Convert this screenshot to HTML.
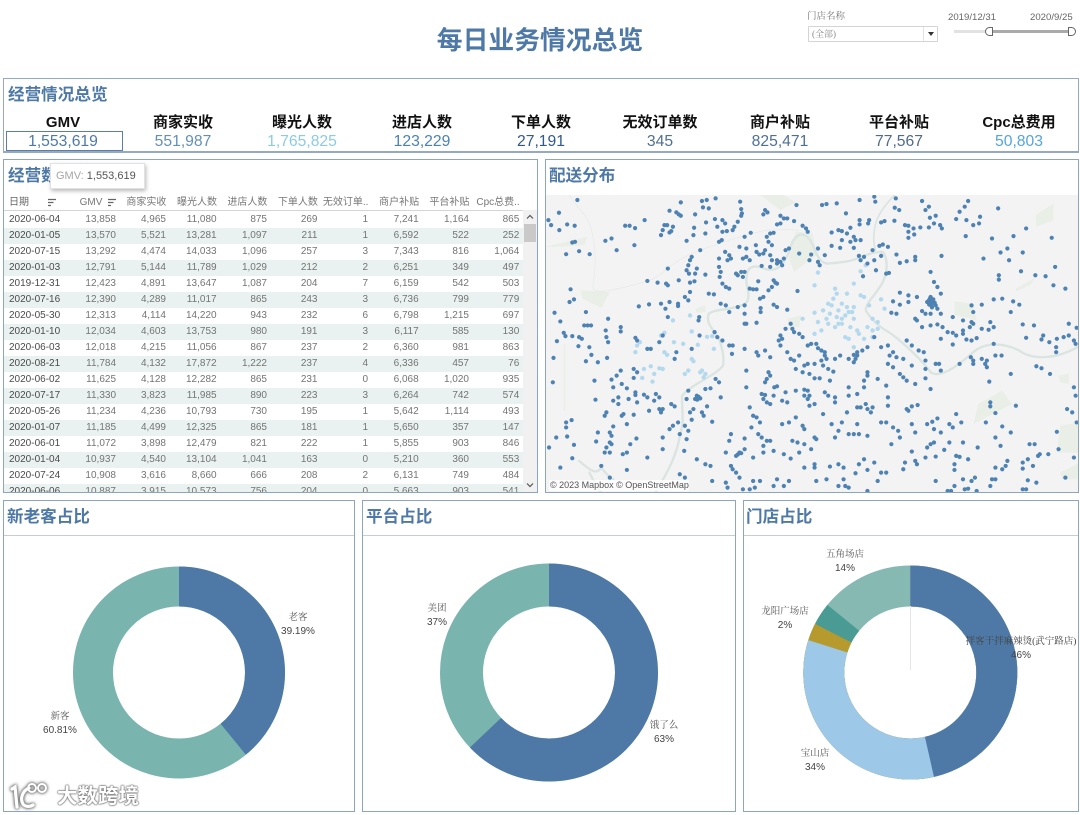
<!DOCTYPE html>
<html lang="zh-CN"><head><meta charset="utf-8"><title>每日业务情况总览</title>
<style>
*{box-sizing:border-box;margin:0;padding:0}
html,body{width:1080px;height:815px;overflow:hidden;background:#fff}
body{position:relative;font-family:"Liberation Sans","Noto Sans CJK SC",sans-serif;color:#444;filter:blur(.3px)}
.a{position:absolute}
.p{position:absolute;border:1px solid #8ea5c2;background:#fff}
.t{position:absolute;font-weight:700;font-size:16.6px;line-height:22px;color:#4e79a7;white-space:nowrap}
.k{position:absolute;width:120px;text-align:center;white-space:nowrap}
.kh{top:112px;font-size:15px;line-height:21px;font-weight:700;color:#111}
.kv{top:132px;font-size:15.7px;line-height:19px}
.hd{position:absolute;top:196px;font-size:10px;line-height:14px;color:#777;text-align:right;white-space:nowrap;width:50.4px}
.r{position:absolute;left:4px;width:519px;height:16.05px;font-size:10px;line-height:16px;color:#747474;white-space:nowrap}
.r:nth-child(even){background:#e9f2f0}
.r span{position:absolute;text-align:right;width:50px;top:0}
.r span:nth-child(1){left:5px;text-align:left;color:#4a4a4a;width:60px}
.r span:nth-child(2){left:62px}.r span:nth-child(3){left:112px}.r span:nth-child(4){left:162.6px}
.r span:nth-child(5){left:213px}.r span:nth-child(6){left:263.5px}.r span:nth-child(7){left:314px}
.r span:nth-child(8){left:364.7px}.r span:nth-child(9){left:415px}.r span:nth-child(10){left:465.3px}
.l{position:absolute;text-align:center;width:120px;font-size:10px;line-height:14px;color:#444;white-space:nowrap}
.l b{display:block;font:400 9.5px/14px "Liberation Serif","Noto Serif CJK SC",serif;color:#555}
.hr{position:absolute;height:1px;background:#c3cedc}
</style></head><body>

<div class="a" style="left:340px;width:400px;top:22px;text-align:center;font-size:25.8px;line-height:38px;font-weight:700;color:#4e79a7">每日业务情况总览</div>

<div class="a" style="left:807px;top:10px;font:400 9.5px/14px 'Liberation Serif','Noto Serif CJK SC',serif;color:#777">门店名称</div>
<div class="a" style="left:808px;top:26px;width:130px;height:16px;border:1px solid #d4d4d4;border-radius:1px;font:400 9px/14px 'Liberation Serif','Noto Serif CJK SC',serif;color:#888;padding-left:3px">(全部)
  <div class="a" style="left:114px;top:0;width:1px;height:14px;background:#e2e2e2"></div>
  <div class="a" style="left:119px;top:5px;border-left:3px solid transparent;border-right:3px solid transparent;border-top:4px solid #333"></div>
</div>
<div class="a" style="left:948px;top:12px;font-size:9.6px;line-height:12px;color:#666">2019/12/31</div>
<div class="a" style="left:1030px;top:12px;font-size:9.6px;line-height:12px;color:#666">2020/9/25</div>
<div class="a" style="left:954px;top:30px;width:36px;height:3px;background:#e2e2e2"></div>
<div class="a" style="left:989px;top:30px;width:82px;height:3px;background:#aaa"></div>
<div class="a" style="left:985px;top:27px;width:8px;height:9px;background:#fff;border:1px solid #666;border-radius:4.5px 0 0 4.5px"></div>
<div class="a" style="left:1068px;top:27px;width:8px;height:9px;background:#fff;border:1px solid #666;border-radius:0 4.5px 4.5px 0"></div>

<!-- KPI panel -->
<div class="p" style="left:3px;top:78px;width:1076px;height:75px;border-bottom-width:2px;border-color:#94a9c4"></div>
<div class="t" style="left:8px;top:84px">经营情况总览</div>
<div class="a" style="left:6px;top:131px;width:117px;height:20px;border:1px solid #5b7ea8"></div>
<div class="k kh" style="left:3px">GMV</div><div class="k kv" style="left:3px;color:#4e79a7">1,553,619</div>
<div class="k kh" style="left:123px">商家实收</div><div class="k kv" style="left:123px;color:#6490b8">551,987</div>
<div class="k kh" style="left:242px">曝光人数</div><div class="k kv" style="left:242px;color:#8ccbe4">1,765,825</div>
<div class="k kh" style="left:362px">进店人数</div><div class="k kv" style="left:362px;color:#4a82b6">123,229</div>
<div class="k kh" style="left:481px">下单人数</div><div class="k kv" style="left:481px;color:#31598f">27,191</div>
<div class="k kh" style="left:600px">无效订单数</div><div class="k kv" style="left:600px;color:#4f7096">345</div>
<div class="k kh" style="left:720px">商户补贴</div><div class="k kv" style="left:720px;color:#4f7096">825,471</div>
<div class="k kh" style="left:839px">平台补贴</div><div class="k kv" style="left:839px;color:#4f6b8c">77,567</div>
<div class="k kh" style="left:959px">Cpc总费用</div><div class="k kv" style="left:959px;color:#55a5dd">50,803</div>

<!-- table panel -->
<div class="p" style="left:3px;top:159px;width:535px;height:334px"></div>
<div class="t" style="left:8px;top:165px">经营数据</div>
<div class="a" style="left:9px;top:196px;font-size:10px;line-height:14px;color:#666">日期</div>
<svg class="a" style="left:47px;top:198px" width="10" height="10"><path d="M1 1.5h8M1 4.5h5.5M1 7.5h3" stroke="#666" stroke-width="1.3" fill="none"/></svg>
<div class="hd" style="left:52px">GMV</div>
<svg class="a" style="left:107px;top:198px" width="10" height="10"><path d="M1 1.5h8M1 4.5h5.5M1 7.5h3" stroke="#666" stroke-width="1.3" fill="none"/></svg>
<div class="hd" style="left:116px">商家实收</div>
<div class="hd" style="left:166.6px">曝光人数</div>
<div class="hd" style="left:217px">进店人数</div>
<div class="hd" style="left:267.5px">下单人数</div>
<div class="hd" style="left:318px">无效订单..</div>
<div class="hd" style="left:368.7px">商户补贴</div>
<div class="hd" style="left:419px">平台补贴</div>
<div class="hd" style="left:469.3px">Cpc总费..</div>
<div class="hr" style="left:4px;top:210px;width:519px;background:#d5d5d5"></div>
<div class="a" style="left:0;top:211px;width:530px;height:281px;overflow:hidden">
<div class="r" style="top:.5px"><span>2020-06-04</span><span>13,858</span><span>4,965</span><span>11,080</span><span>875</span><span>269</span><span>1</span><span>7,241</span><span>1,164</span><span>865</span></div>
<div class="r" style="top:16.55px"><span>2020-01-05</span><span>13,570</span><span>5,521</span><span>13,281</span><span>1,097</span><span>211</span><span>1</span><span>6,592</span><span>522</span><span>252</span></div>
<div class="r" style="top:32.6px"><span>2020-07-15</span><span>13,292</span><span>4,474</span><span>14,033</span><span>1,096</span><span>257</span><span>3</span><span>7,343</span><span>816</span><span>1,064</span></div>
<div class="r" style="top:48.65px"><span>2020-01-03</span><span>12,791</span><span>5,144</span><span>11,789</span><span>1,029</span><span>212</span><span>2</span><span>6,251</span><span>349</span><span>497</span></div>
<div class="r" style="top:64.7px"><span>2019-12-31</span><span>12,423</span><span>4,891</span><span>13,647</span><span>1,087</span><span>204</span><span>7</span><span>6,159</span><span>542</span><span>503</span></div>
<div class="r" style="top:80.75px"><span>2020-07-16</span><span>12,390</span><span>4,289</span><span>11,017</span><span>865</span><span>243</span><span>3</span><span>6,736</span><span>799</span><span>779</span></div>
<div class="r" style="top:96.8px"><span>2020-05-30</span><span>12,313</span><span>4,114</span><span>14,220</span><span>943</span><span>232</span><span>6</span><span>6,798</span><span>1,215</span><span>697</span></div>
<div class="r" style="top:112.85px"><span>2020-01-10</span><span>12,034</span><span>4,603</span><span>13,753</span><span>980</span><span>191</span><span>3</span><span>6,117</span><span>585</span><span>130</span></div>
<div class="r" style="top:128.9px"><span>2020-06-03</span><span>12,018</span><span>4,215</span><span>11,056</span><span>867</span><span>237</span><span>2</span><span>6,360</span><span>981</span><span>863</span></div>
<div class="r" style="top:144.95px"><span>2020-08-21</span><span>11,784</span><span>4,132</span><span>17,872</span><span>1,222</span><span>237</span><span>4</span><span>6,336</span><span>457</span><span>76</span></div>
<div class="r" style="top:161px"><span>2020-06-02</span><span>11,625</span><span>4,128</span><span>12,282</span><span>865</span><span>231</span><span>0</span><span>6,068</span><span>1,020</span><span>935</span></div>
<div class="r" style="top:177.05px"><span>2020-07-17</span><span>11,330</span><span>3,823</span><span>11,985</span><span>890</span><span>223</span><span>3</span><span>6,264</span><span>742</span><span>574</span></div>
<div class="r" style="top:193.1px"><span>2020-05-26</span><span>11,234</span><span>4,236</span><span>10,793</span><span>730</span><span>195</span><span>1</span><span>5,642</span><span>1,114</span><span>493</span></div>
<div class="r" style="top:209.15px"><span>2020-01-07</span><span>11,185</span><span>4,499</span><span>12,325</span><span>865</span><span>181</span><span>1</span><span>5,650</span><span>357</span><span>147</span></div>
<div class="r" style="top:225.2px"><span>2020-06-01</span><span>11,072</span><span>3,898</span><span>12,479</span><span>821</span><span>222</span><span>1</span><span>5,855</span><span>903</span><span>846</span></div>
<div class="r" style="top:241.25px"><span>2020-01-04</span><span>10,937</span><span>4,540</span><span>13,104</span><span>1,041</span><span>163</span><span>0</span><span>5,210</span><span>360</span><span>553</span></div>
<div class="r" style="top:257.3px"><span>2020-07-24</span><span>10,908</span><span>3,616</span><span>8,660</span><span>666</span><span>208</span><span>2</span><span>6,131</span><span>749</span><span>484</span></div>
<div class="r" style="top:273.35px"><span>2020-06-06</span><span>10,887</span><span>3,915</span><span>10,573</span><span>756</span><span>204</span><span>0</span><span>5,663</span><span>903</span><span>541</span></div>
</div>
<div class="a" style="left:523px;top:210px;width:14px;height:282px;background:#f1f1f1"></div>
<div class="a" style="left:524px;top:224px;width:12px;height:18px;background:#c9c9c9"></div>
<svg class="a" style="left:525px;top:213px" width="10" height="8"><path d="M2 5.5L5 2.5L8 5.5" stroke="#555" stroke-width="1.2" fill="none"/></svg>
<svg class="a" style="left:525px;top:481px" width="10" height="8"><path d="M2 2.5L5 5.5L8 2.5" stroke="#555" stroke-width="1.2" fill="none"/></svg>

<div class="a" style="left:50px;top:163px;width:95px;height:26px;background:#fff;border:1px solid #e2e2e2;box-shadow:1px 2px 4px rgba(0,0,0,.28);font-size:11px;line-height:24px;padding-left:5px;color:#a5a5a5;white-space:nowrap">GMV: <span style="color:#555">1,553,619</span></div>

<!-- map panel -->
<div class="p" style="left:545px;top:159px;width:534px;height:334px"></div>
<div class="t" style="left:549px;top:165px">配送分布</div>
<svg class="a" style="left:546px;top:195px;background:#f3f3f3" width="532" height="297" viewBox="3 0 1559 888" preserveAspectRatio="none">
<g fill="#e9eee7">
<path d="M630 0L700 0L735 22L690 45Z"/><path d="M735 110L785 115L795 180L730 230L715 190Z"/><path d="M105 285L190 290L165 338L110 310Z"/><path d="M1200 318L1255 325L1265 375L1200 358Z"/><path d="M1270 625L1340 585L1368 625L1255 685Z"/><path d="M1438 60L1490 25L1490 75L1440 95Z"/><path d="M1380 280L1435 248L1425 268L1380 288Z"/><path d="M1510 690L1568 680V770L1500 770Z"/><path d="M1510 830L1568 800V850L1515 850Z"/><path d="M0 155L125 125L115 150L30 155Z"/><path d="M440 340L470 330V350L445 352Z"/><path d="M710 370L750 360L745 395L715 395Z"/><path d="M1505 540L1535 535V565L1510 560Z"/><path d="M55 445h4v200h-4Z"/>
</g>
<g fill="none" stroke="#dae5e2" stroke-linejoin="round" stroke-linecap="round">
<path stroke-width="7" d="M320 897C345 850 385 790 395 720C410 680 400 640 402 600C430 565 500 540 522 510C525 480 520 460 510 430C490 400 470 380 480 355C500 340 540 345 575 330C600 325 600 300 590 260C590 220 600 210 630 215C680 240 705 210 725 140C745 105 770 115 785 150C800 190 810 205 830 205C860 202 890 200 915 190C940 178 965 170 990 170C1005 190 1005 230 990 260C970 300 940 320 940 345C960 380 990 400 1015 415C1060 450 1110 500 1130 530C1160 550 1210 510 1255 470C1290 440 1340 440 1390 465C1430 495 1500 490 1560 455"/>
<path stroke-width="5" d="M1025 0C995 30 975 60 968 90C962 120 962 140 968 165"/>
<path stroke-width="7" d="M100 795C130 820 150 840 165 815C180 835 190 845 200 850M130 830C150 870 155 880 170 897"/>
</g>
<g fill="none" stroke="#e4e9e6" stroke-width="2">
<path d="M70 0C90 30 130 70 135 100C150 160 150 210 140 275C145 300 200 285 300 258C350 240 350 215 420 180C500 145 600 115 650 105C690 105 720 100 745 108"/>
</g>
<path fill="none" stroke="#b4d9ee" stroke-width="13" stroke-linecap="round" d="M800 232h0M790 270h0M850 280h0M855 295h0M830 325h0M840 330h0M870 325h0M885 335h0M925 300h0M935 305h0M905 265h0M885 295h0M950 330h0M985 312h0M995 340h0M790 352h0M815 345h0M835 355h0M855 365h0M870 370h0M880 360h0M900 350h0M905 370h0M860 385h0M850 395h0M830 385h0M800 380h0M810 405h0M790 415h0M915 405h0M920 415h0M960 370h0M975 380h0M975 400h0M960 405h0M960 425h0M935 430h0M905 455h0M890 430h0M880 425h0M755 370h0M940 210h0M925 228h0M375 375h0M425 360h0M430 408h0M350 412h0M340 420h0M490 422h0M475 424h0M448 448h0M405 445h0M378 440h0M495 460h0M278 440h0M270 450h0M265 470h0M350 470h0M358 478h0M435 497h0M430 490h0M290 520h0M310 512h0M335 518h0M345 520h0M320 535h0M285 547h0M420 525h0M410 535h0M460 525h0M465 545h0M455 530h0M315 558h0M470 535h0M845 310h0M860 345h0M890 350h0M870 385h0M895 395h0M945 395h0M905 335h0M825 370h0"/>
<path fill="none" stroke="#4d82b3" stroke-width="12.5" stroke-linecap="round" d="M95 15h0M41 53h0M10 75h0M18 90h0M42 105h0M65 88h0M87 92h0M235 92h0M248 92h0M264 99h0M292 75h0M365 47h0M385 52h0M392 58h0M398 62h0M398 22h0M460 18h0M474 15h0M500 10h0M480 40h0M463 37h0M440 58h0M572 20h0M575 42h0M577 55h0M575 62h0M645 45h0M652 52h0M640 58h0M700 70h0M690 62h0M737 30h0M812 30h0M825 27h0M855 25h0M882 55h0M922 15h0M965 5h0M968 20h0M1028 10h0M1025 38h0M1038 45h0M1105 18h0M1125 35h0M1115 45h0M1240 18h0M1230 35h0M1215 50h0M1328 40h0M1205 72h0M1235 75h0M1275 65h0M1272 85h0M1255 90h0M1410 100h0M1310 130h0M1373 123h0M1485 128h0M1233 123h0M1145 62h0M1128 68h0M1140 85h0M1125 97h0M1158 90h0M1163 100h0M1100 97h0M1055 90h0M1065 92h0M1080 100h0M1065 110h0M1082 118h0M1065 128h0M1024 77h0M995 78h0M985 82h0M950 75h0M947 85h0M922 75h0M922 88h0M895 98h0M860 105h0M870 108h0M840 112h0M885 115h0M905 125h0M895 140h0M910 135h0M925 135h0M870 135h0M840 152h0M865 158h0M905 158h0M980 152h0M990 148h0M1005 155h0M960 165h0M920 182h0M935 185h0M925 195h0M945 205h0M985 182h0M965 195h0M970 225h0M1030 178h0M1040 203h0M1060 198h0M1085 185h0M1085 195h0M1162 182h0M1000 235h0M1008 233h0M932 243h0M88 140h0M80 142h0M177 137h0M195 130h0M210 165h0M262 150h0M62 177h0M100 168h0M131 177h0M350 90h0M358 90h0M345 105h0M375 95h0M370 108h0M340 120h0M365 112h0M437 98h0M470 115h0M435 120h0M415 137h0M472 82h0M498 72h0M520 75h0M528 85h0M505 95h0M520 110h0M533 108h0M550 105h0M565 80h0M555 95h0M585 125h0M603 113h0M518 135h0M510 140h0M570 155h0M590 160h0M618 150h0M660 115h0M670 113h0M650 125h0M655 140h0M665 150h0M645 165h0M628 178h0M640 175h0M620 170h0M590 185h0M580 190h0M600 195h0M540 180h0M545 190h0M528 170h0M510 190h0M535 195h0M455 165h0M430 185h0M425 195h0M420 210h0M360 220h0M415 225h0M445 220h0M440 235h0M422 235h0M470 238h0M510 215h0M515 230h0M512 245h0M575 230h0M565 240h0M585 230h0M560 235h0M580 245h0M635 212h0M660 215h0M680 205h0M695 210h0M690 200h0M680 195h0M700 190h0M705 165h0M715 160h0M660 180h0M665 195h0M745 175h0M780 178h0M775 195h0M800 200h0M805 210h0M820 180h0M800 160h0M770 110h0M765 100h0M755 92h0M730 78h0M710 70h0M690 85h0M680 88h0M300 257h0M330 262h0M360 270h0M355 265h0M392 255h0M425 262h0M438 258h0M520 265h0M530 275h0M540 280h0M620 282h0M610 282h0M625 258h0M675 262h0M665 275h0M655 285h0M740 287h0M480 295h0M495 297h0M425 290h0M410 305h0M420 315h0M390 325h0M390 332h0M365 320h0M340 325h0M275 333h0M305 327h0M353 340h0M360 365h0M75 282h0M72 320h0M85 312h0M28 352h0M120 350h0M185 370h0M45 378h0M115 390h0M125 390h0M135 390h0M178 405h0M180 425h0M185 440h0M222 395h0M222 408h0M55 412h0M60 422h0M80 422h0M100 425h0M108 430h0M35 437h0M98 452h0M130 455h0M136 478h0M120 497h0M155 500h0M182 487h0M25 487h0M145 555h0M23 560h0M148 612h0M265 427h0M270 435h0M300 460h0M310 460h0M335 440h0M345 420h0M380 490h0M385 470h0M430 460h0M453 420h0M450 375h0M452 365h0M515 325h0M530 330h0M540 350h0M565 335h0M585 330h0M632 338h0M632 350h0M630 310h0M640 305h0M600 280h0M670 328h0M680 335h0M710 343h0M585 355h0M585 385h0M620 382h0M590 385h0M497 410h0M505 425h0M520 435h0M540 450h0M550 450h0M548 475h0M585 460h0M620 470h0M625 480h0M645 465h0M660 485h0M590 525h0M655 530h0M660 540h0M650 550h0M645 560h0M590 575h0M680 572h0M672 575h0M635 595h0M645 598h0M640 610h0M670 600h0M660 625h0M650 620h0M695 615h0M710 620h0M705 590h0M735 585h0M760 582h0M770 585h0M760 600h0M770 610h0M775 600h0M820 590h0M830 600h0M850 605h0M850 620h0M790 625h0M775 630h0M890 600h0M915 595h0M890 575h0M935 575h0M945 540h0M935 555h0M1000 570h0M1005 605h0M915 635h0M925 635h0M940 625h0M945 640h0M960 635h0M955 650h0M885 650h0M1005 630h0M1060 640h0M1075 632h0M1092 628h0M1065 645h0M1305 620h0M1305 632h0M1320 652h0M1380 630h0M690 420h0M695 430h0M685 435h0M705 400h0M725 400h0M730 410h0M745 415h0M755 425h0M720 385h0M690 450h0M710 470h0M720 490h0M730 495h0M745 480h0M770 450h0M780 445h0M795 445h0M800 458h0M810 465h0M820 480h0M825 490h0M810 495h0M815 510h0M790 505h0M770 505h0M760 510h0M735 520h0M755 530h0M775 535h0M790 548h0M805 548h0M835 555h0M845 528h0M830 520h0M850 490h0M865 480h0M890 490h0M910 490h0M905 500h0M915 470h0M930 465h0M945 455h0M965 425h0M985 455h0M1005 450h0M1020 470h0M1010 480h0M1030 485h0M1005 505h0M1020 515h0M1050 490h0M1075 510h0M1040 535h0M1050 545h0M1060 555h0M1085 565h0M1115 548h0M1130 580h0M1115 520h0M1145 505h0M1155 505h0M1160 525h0M1095 465h0M1110 470h0M1060 435h0M1075 450h0M1115 495h0M975 550h0M945 530h0M1140 260h0M1150 275h0M1160 295h0M1130 305h0M1125 315h0M1135 325h0M1120 320h0M1145 330h0M1150 340h0M1130 355h0M1160 355h0M1105 347h0M1115 355h0M1085 370h0M1090 375h0M1105 395h0M1130 390h0M1150 387h0M1165 395h0M1180 410h0M1195 412h0M1205 420h0M1160 430h0M1195 447h0M1225 375h0M1250 380h0M1255 385h0M1245 395h0M1225 405h0M1225 415h0M1235 432h0M1250 435h0M1265 428h0M1280 400h0M1300 403h0M1305 380h0M1315 395h0M1065 300h0M1040 292h0M1020 318h0M1015 352h0M1030 355h0M1065 320h0M1040 328h0M1090 305h0M1130 230h0M1195 365h0M1250 330h0M1280 328h0M1255 350h0M1315 312h0M1340 310h0M1372 318h0M1390 328h0M1365 350h0M1400 387h0M1433 390h0M1535 385h0M1558 397h0M1460 420h0M1455 432h0M1478 440h0M1500 430h0M1520 425h0M1535 420h0M1550 435h0M1555 445h0M1498 455h0M1498 470h0M1410 427h0M1315 445h0M1338 480h0M1320 480h0M1248 485h0M1255 505h0M1280 490h0M1295 495h0M1295 515h0M1215 505h0M1440 512h0M1455 518h0M1365 535h0M1480 535h0M1302 558h0M1550 575h0M1555 600h0M1530 640h0M1545 650h0M1558 680h0M1285 190h0M1335 172h0M1355 160h0M1400 172h0M1360 195h0M1495 215h0M1395 228h0M1330 240h0M1330 253h0M1437 240h0M1467 243h0M1490 270h0M1525 280h0M260 520h0M270 530h0M260 547h0M222 525h0M210 540h0M195 552h0M225 565h0M240 578h0M200 575h0M265 590h0M265 598h0M290 597h0M300 605h0M325 595h0M335 605h0M320 615h0M345 640h0M335 640h0M340 650h0M305 645h0M270 620h0M245 610h0M215 605h0M200 615h0M215 625h0M370 625h0M380 632h0M230 655h0M225 660h0M260 657h0M180 650h0M175 660h0M78 673h0M62 680h0M62 695h0M65 722h0M33 725h0M85 747h0M12 755h0M80 787h0M45 815h0M200 692h0M240 685h0M190 710h0M195 720h0M155 710h0M150 737h0M190 740h0M195 745h0M180 755h0M190 770h0M175 770h0M228 775h0M240 770h0M250 745h0M268 728h0M300 785h0M345 725h0M345 760h0M375 690h0M365 700h0M390 680h0M410 690h0M420 705h0M395 715h0M415 730h0M408 765h0M425 650h0M430 672h0M460 650h0M465 660h0M490 678h0M475 632h0M445 600h0M455 608h0M440 610h0M420 585h0M415 610h0M435 640h0M515 605h0M500 550h0M510 560h0M470 580h0M485 578h0M165 810h0M240 822h0M190 845h0M545 715h0M540 735h0M585 728h0M600 635h0M610 660h0M620 665h0M630 680h0M605 695h0M625 715h0M635 725h0M650 735h0M640 750h0M660 735h0M670 765h0M725 735h0M740 740h0M760 745h0M695 685h0M715 680h0M735 665h0M755 690h0M760 700h0M790 725h0M795 730h0M815 655h0M840 685h0M870 680h0M860 705h0M890 715h0M905 715h0M920 715h0M945 720h0M915 685h0M850 725h0M780 760h0M745 770h0M700 775h0M640 770h0M610 785h0M585 760h0M570 770h0M560 780h0M530 770h0M720 788h0M470 805h0M485 810h0M445 790h0M545 810h0M550 820h0M560 830h0M570 845h0M530 860h0M535 875h0M490 855h0M580 880h0M610 855h0M630 855h0M615 875h0M680 850h0M670 870h0M715 855h0M700 870h0M790 805h0M790 815h0M760 815h0M835 812h0M860 805h0M875 815h0M920 805h0M935 790h0M965 800h0M945 822h0M910 832h0M985 830h0M1000 830h0M1050 820h0M1055 800h0M1085 795h0M1090 805h0M1015 745h0M1000 680h0M985 680h0M1020 695h0M1035 705h0M1040 725h0M1075 685h0M1085 710h0M1075 767h0M1120 685h0M1135 678h0M1150 668h0M1140 700h0M1160 710h0M1185 685h0M1195 695h0M1205 655h0M1220 680h0M1130 745h0M1140 740h0M1120 755h0M1145 782h0M1115 785h0M1185 740h0M1170 762h0M1225 740h0M1268 755h0M1292 680h0M1320 725h0M1340 692h0M1365 710h0M1335 750h0M1205 780h0M1215 783h0M1240 790h0M1200 805h0M1200 822h0M1320 815h0M1355 795h0M1350 810h0M1340 820h0M1415 790h0M1400 800h0M1400 818h0M1430 810h0M1445 780h0M1450 775h0M1420 745h0M1435 745h0M1475 775h0M1505 760h0M1550 785h0M1500 708h0M1525 845h0M1415 853h0M1440 860h0M1400 880h0M1410 880h0M1320 850h0M1310 850h0M1305 870h0M1260 845h0M1250 855h0M1225 850h0M1200 870h0M1230 880h0M1240 878h0M1265 885h0M1180 885h0M1190 885h0M1145 855h0M975 855h0M880 870h0M875 850h0M825 850h0M795 855h0M860 870h0M890 875h0M945 885h0M395 835h0M410 845h0M600 880h0M1128 310h0M1138 312h0M1132 318h0M1142 322h0M1126 328h0M1134 336h0M670 255h0M680 265h0M450 603h0M446 612h0M820 470h0M915 480h0M905 478h0M575 772h0M565 776h0M1290 505h0M1255 495h0"/>
</svg>
<div class="a" style="left:549px;top:480px;width:140px;height:11px;background:rgba(255,255,255,.75);font-size:9px;line-height:11px;color:#555;padding-left:1px;white-space:nowrap">© 2023 Mapbox © OpenStreetMap</div>

<!-- bottom panels -->
<div class="p" style="left:3px;top:500px;width:352px;height:312px"></div>
<div class="t" style="left:7px;top:506px">新老客占比</div>
<div class="hr" style="left:4px;top:535px;width:350px"></div>
<div class="p" style="left:362px;top:500px;width:374px;height:312px"></div>
<div class="t" style="left:366px;top:506px">平台占比</div>
<div class="hr" style="left:363px;top:535px;width:372px"></div>
<div class="p" style="left:743px;top:500px;width:336px;height:312px"></div>
<div class="t" style="left:746px;top:506px">门店占比</div>
<div class="hr" style="left:744px;top:535px;width:334px"></div>

<svg class="a" style="left:0;top:0" width="1080" height="815" fill="none">
<g transform="rotate(-90 179 672.5)" stroke-width="40">
<circle cx="179" cy="672.5" r="86" stroke="#79b5ae"/>
<circle cx="179" cy="672.5" r="86" stroke="#4e79a7" pathLength="100" stroke-dasharray="39.19 100"/>
</g>
<g transform="rotate(-90 549 672.5)" stroke-width="43">
<circle cx="549" cy="672.5" r="87.5" stroke="#79b5ae"/>
<circle cx="549" cy="672.5" r="87.5" stroke="#4e79a7" pathLength="100" stroke-dasharray="63 100"/>
</g>
<g transform="rotate(-90 910.3 672.5)" stroke-width="41">
<circle cx="910.3" cy="672.5" r="86.5" stroke="#85b9b1"/>
<circle cx="910.3" cy="672.5" r="86.5" stroke="#499b93" pathLength="100" stroke-dasharray="86 100"/>
<circle cx="910.3" cy="672.5" r="86.5" stroke="#b69a2e" pathLength="100" stroke-dasharray="82.6 100"/>
<circle cx="910.3" cy="672.5" r="86.5" stroke="#9dc8e8" pathLength="100" stroke-dasharray="80 100"/>
<circle cx="910.3" cy="672.5" r="86.5" stroke="#4e79a7" pathLength="100" stroke-dasharray="46.5 100"/>
</g>
<path d="M910.5 606V670" stroke="#e6e6e6" stroke-width="1"/>
</svg>

<div class="l" style="left:238px;top:611px"><b>老客</b>39.19%</div>
<div class="l" style="left:0;top:710px"><b>新客</b>60.81%</div>
<div class="l" style="left:377px;top:602px"><b>美团</b>37%</div>
<div class="l" style="left:604px;top:719px"><b>饿了么</b>63%</div>
<div class="l" style="left:785px;top:548px"><b>五角场店</b>14%</div>
<div class="l" style="left:725px;top:605px"><b>龙阳广场店</b>2%</div>
<div class="l" style="left:755px;top:747px"><b>宝山店</b>34%</div>
<div class="l" style="left:961px;top:635px"><b style="color:#444">拌客干拌麻辣烫(武宁路店)</b>46%</div>

<!-- watermark -->
<svg class="a" style="left:8px;top:779px;filter:drop-shadow(0 0 1.5px #666) drop-shadow(0 0 1px #888)" width="48" height="32" fill="none" stroke="#fff" stroke-width="3.2" stroke-linecap="round">
<path d="M4 10L7 8L9 28"/><path d="M21 9C14 12 12 20 15 25C17 28 22 28 25 26"/>
<circle cx="24" cy="9" r="4" stroke-width="2"/><circle cx="34" cy="9" r="4" stroke-width="2"/>
</svg>
<div class="a" style="left:57px;top:781px;font:700 20.5px/26px 'Noto Sans CJK SC',sans-serif;color:#fff;white-space:nowrap;text-shadow:0 0 1.5px #666,0 0 1.5px #666,0 0 2px #888">大数跨境</div>
</body></html>
